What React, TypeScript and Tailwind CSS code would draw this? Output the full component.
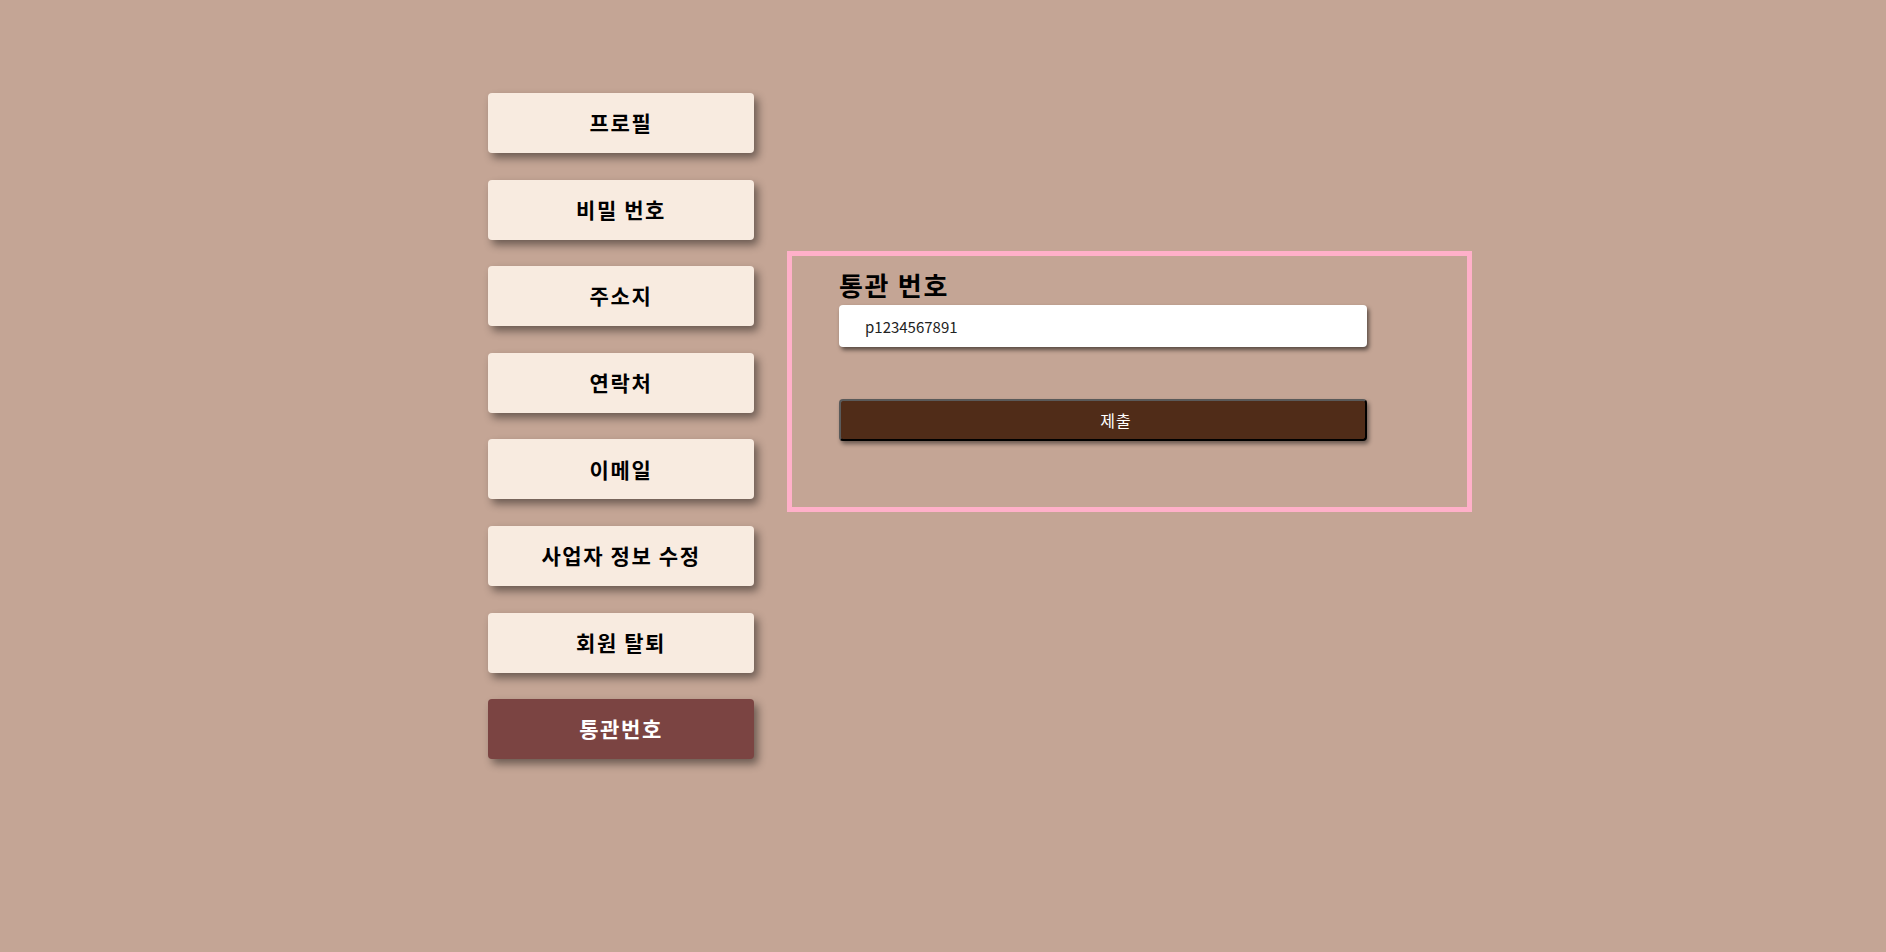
import React, { useState } from 'react';

const menuItems = ['프로필', '비밀 번호', '주소지', '연락처', '이메일', '사업자 정보 수정', '회원 탈퇴', '통관번호'];

const font = { fontFamily: '"Noto Sans CJK KR", "Noto Sans", sans-serif' };

const MenuButton: React.FC<{ label: string; active: boolean; onClick: () => void }> = ({ label, active, onClick }) => (
  <button
    onClick={onClick}
    className={`h-[60px] w-[266px] rounded-[4px] text-[21px] font-bold tracking-[1.6px] shadow-[4px_5px_8px_rgba(0,0,0,0.45)] ${
      active ? 'bg-[#7b4442] text-white' : 'bg-[#f8ebe0] text-black'
    }`}
  >
    {label}
  </button>
);

export default function App() {
  const [active, setActive] = useState('통관번호');
  const [code, setCode] = useState('p1234567891');

  return (
    <div className="h-[952px] w-full bg-[#c4a595]" style={font}>
      <div className="flex items-start pl-[488px] pt-[93px]">
        <div className="flex w-[266px] flex-col gap-[26.6px]">
          {menuItems.map(item => (
            <MenuButton key={item} label={item} active={item === active} onClick={() => setActive(item)} />
          ))}
        </div>

        <div className="ml-[33px] mt-[158px] h-[261px] w-[685px] border-[5px] border-[#ffb0c9] pl-[47px] pt-[13px]">
          <h2 className="text-[26px] font-bold leading-[32px] tracking-[1.7px] text-black">통관 번호</h2>
          <input
            value={code}
            onChange={e => setCode(e.target.value)}
            className="mt-[4px] block h-[42px] w-[528px] rounded-[4px] bg-white pl-[26px] text-[15px] text-[#222] shadow-[2px_3px_4px_rgba(0,0,0,0.55)] outline-none"
          />
          <button className="mt-[52px] block h-[42px] w-[528px] rounded-[4px] border-2 border-b-black border-l-[#5a5a5a] border-r-black border-t-[#5a5a5a] bg-[#502c18] pl-[26px] text-[16px] tracking-[1px] text-white shadow-[2px_3px_4px_rgba(0,0,0,0.45)]">
            제출
          </button>
        </div>
      </div>
    </div>
  );
}
